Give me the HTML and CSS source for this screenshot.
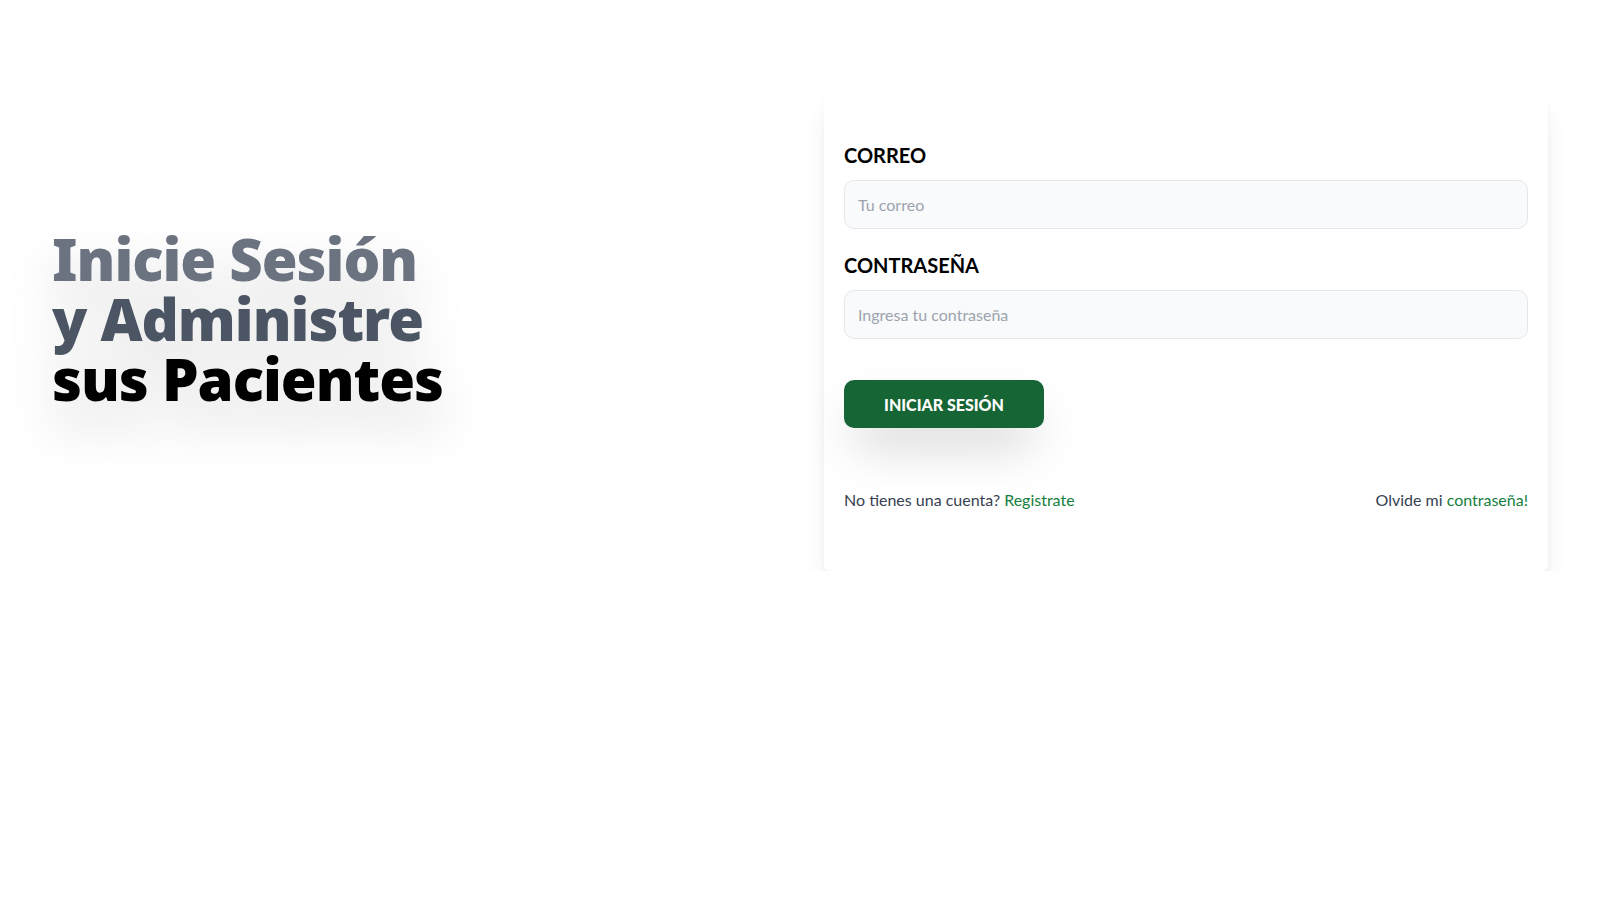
FILE: index.html
```html
<!DOCTYPE html>
<html lang="es">
<head>
<meta charset="utf-8">
<title>Iniciar Sesión</title>
<link rel="stylesheet" href="styles.css">
</head>
<body>
<main class="page">
  <section class="intro">
    <h1 class="headline">
      <span class="l1">Inicie Sesión</span>
      <span class="l2">y Administre</span>
      <span class="l3">sus Pacientes</span>
    </h1>
  </section>
  <section class="card">
    <form class="form">
      <label class="label" for="email">Correo</label>
      <input class="input" id="email" type="email" placeholder="Tu correo">
      <label class="label second" for="password">Contraseña</label>
      <input class="input" id="password" type="password" placeholder="Ingresa tu contraseña">
      <button class="btn" type="button">Iniciar Sesión</button>
    </form>
    <nav class="links">
      <p class="link-item">No tienes una cuenta? <a href="#" class="green">Registrate</a></p>
      <p class="link-item">Olvide mi <a href="#" class="green">contraseña!</a></p>
    </nav>
  </section>
</main>
</body>
</html>
```
FILE: styles.css
```css
* { box-sizing: border-box; }
html, body { margin: 0; padding: 0; background: #ffffff; }
body {
  font-family: "Lato", "Noto Sans", "Liberation Sans", sans-serif;
  color: #374151;
}
.page {
  max-width: 1536px;
  margin: 0 auto;
  padding: 87px 20px 0;
  display: grid;
  grid-template-columns: 1fr 1fr;
  column-gap: 48px;
  align-items: center;
}
.intro { display: flex; }
.headline {
  margin: 0 0 20px 0;
  font-family: "Noto Sans", "Lato", sans-serif;
  font-size: 58px;
  line-height: 60px;
  font-weight: 900;
  letter-spacing: -1px;
  display: flex;
  flex-direction: column;
  filter: drop-shadow(0 25px 25px rgba(0,0,0,0.15));
}
.l1 { color: #6b7280; }
.l2 { color: #4b5563; }
.l3 { color: #000000; }
.card {
  background: #ffffff;
  border-radius: 6px;
  box-shadow: 0 20px 25px -5px rgba(0,0,0,0.1), 0 8px 10px -6px rgba(0,0,0,0.1);
  padding: 54px 20px 59px;
}
.form { display: flex; flex-direction: column; align-items: stretch; }
.label {
  display: block;
  font-size: 20px;
  line-height: 28px;
  font-weight: 700;
  text-transform: uppercase;
  color: #000000;
}
.label.second { margin-top: 22px; }
.input {
  margin-top: 11px;
  height: 49px;
  border: 1px solid #e5e7eb;
  border-radius: 10px;
  background: #f9fafb;
  padding: 0 13px;
  font-family: inherit;
  font-size: 16px;
  color: #111827;
  outline: none;
}
.input::placeholder { color: #9ca3af; }
.btn {
  margin-top: 41px;
  align-self: flex-start;
  width: 200px;
  height: 48px;
  border: none;
  border-radius: 10px;
  background: #166534;
  color: #ffffff;
  font-family: inherit;
  font-size: 16px;
  font-weight: 900;
  text-transform: uppercase;
  box-shadow: 0 25px 50px -12px rgba(0,0,0,0.25);
  cursor: pointer;
}
.links {
  margin-top: 60px;
  display: flex;
  justify-content: space-between;
}
.link-item {
  margin: 0;
  font-size: 16px;
  line-height: 24px;
  color: #374151;
  box-shadow: 0 25px 50px -12px rgba(0,0,0,0.04);
}
.green { color: #15803d; text-decoration: none; }
```
